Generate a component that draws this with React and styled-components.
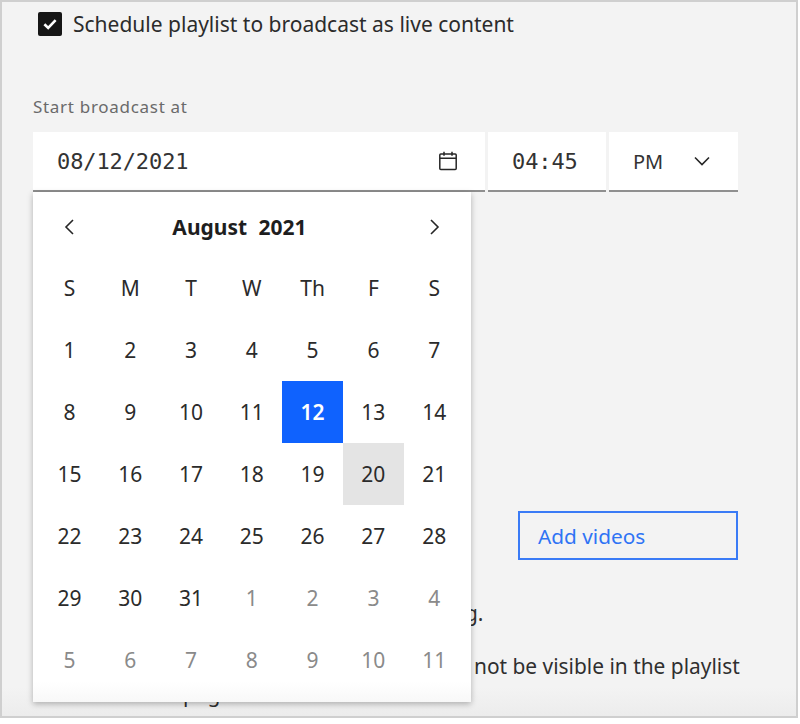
import React from "react";
import styled, { createGlobalStyle } from "styled-components";

const Global = createGlobalStyle`
  html, body { margin: 0; padding: 0; background: #fff; }
  body { font-family: "Noto Sans", "Liberation Sans", sans-serif; color: #262626; }
`;

const Frame = styled.div`
  box-sizing: border-box;
  width: 798px;
  height: 718px;
  background: linear-gradient(to bottom, #f3f3f3 96%, #ececec 100%);
  border: 2px solid #cfcfcf;
  padding: 0 0 0 31px;
  overflow: hidden;
  display: flex;
  flex-direction: column;
`;

const CheckRow = styled.div`
  display: flex;
  align-items: center;
  gap: 11px;
  margin: 10px 0 0 5px;
  height: 24px;
`;

const CheckBox = styled.div`
  width: 24px;
  height: 24px;
  background: #161616;
  border-radius: 2px;
  display: flex;
  align-items: center;
  justify-content: center;
`;

const CheckLabel = styled.span`
  font-size: 21px;
  line-height: 24px;
  color: #2b2b2b;
  white-space: nowrap;
`;

const FieldLabel = styled.div`
  margin-top: 59px;
  height: 24px;
  font-size: 17px;
  line-height: 24px;
  letter-spacing: 0.7px;
  color: #6a6a6a;
`;

const Fields = styled.div`
  position: relative;
  display: flex;
  gap: 3px;
  margin-top: 13px;
  height: 60px;
`;

const Field = styled.div`
  box-sizing: border-box;
  width: ${(p) => p.$w}px;
  height: 60px;
  background: #fff;
  border-bottom: 2px solid #8f8f8f;
  display: flex;
  align-items: center;
  justify-content: space-between;
  padding: ${(p) => p.$pad};
  color: #333;
`;

const Mono = styled.span`
  font-family: "DejaVu Sans Mono", "Liberation Mono", monospace;
  font-size: 22px;
  letter-spacing: -0.1px;
`;

const SansValue = styled.span`
  font-size: 20px;
`;

const Popover = styled.div`
  position: absolute;
  left: 0;
  top: 60px;
  z-index: 2;
  box-sizing: border-box;
  width: 438px;
  height: 510px;
  background: linear-gradient(to bottom, #fff 96%, #f8f8f8 100%);
  box-shadow: 0 2px 6px rgba(0, 0, 0, 0.28);
  padding: 5px 6px 0;
`;

const CalHeader = styled.div`
  display: flex;
  align-items: center;
  justify-content: space-between;
  height: 59.5px;
  padding: 0 21px;
`;

const Month = styled.div`
  font-size: 21px;
  font-weight: 700;
  color: #1e1e1e;
  word-spacing: 6px;
  margin-right: 25px;
`;

const CalGrid = styled.div`
  display: grid;
  grid-template-columns: repeat(7, 60.8px);
  grid-auto-rows: 62px;
`;

const Cell = styled.div`
  display: flex;
  align-items: center;
  justify-content: center;
  font-size: 21px;
  color: ${(p) => (p.$selected ? "#fff" : p.$muted ? "#8a8a8a" : "#2b2b2b")};
  font-weight: ${(p) => (p.$selected ? 600 : 400)};
  background: ${(p) => (p.$selected ? "#0f62fe" : p.$today ? "#e4e4e4" : "transparent")};
`;

const ButtonRow = styled.div`
  display: flex;
  justify-content: flex-end;
  margin-top: 319px;
  padding-right: 58px;
`;

const AddButton = styled.div`
  box-sizing: border-box;
  width: 220px;
  height: 49px;
  border: 2px solid #3a7bf6;
  color: #2f74f5;
  font-size: 20.8px;
  display: flex;
  align-items: center;
  padding-left: 18px;
`;

const Note = styled.div`
  font-size: 20.9px;
  line-height: 28px;
  color: #2f2f2f;
  white-space: nowrap;
  margin-top: ${(p) => p.$top}px;
  padding-left: ${(p) => p.$left}px;
`;

const Svg = styled.svg`
  display: block;
  flex: none;
`;

const Chevron = ({ d, size = 20 }) => (
  <Svg width={size} height={size} viewBox="0 0 20 20" fill="none" stroke="#262626" strokeWidth="1.6">
    <path d={d} />
  </Svg>
);

const weeks = [
  ["1", "2", "3", "4", "5", "6", "7"],
  ["8", "9", "10", "11", "12", "13", "14"],
  ["15", "16", "17", "18", "19", "20", "21"],
  ["22", "23", "24", "25", "26", "27", "28"],
  ["29", "30", "31", "1", "2", "3", "4"],
  ["5", "6", "7", "8", "9", "10", "11"],
];

const heads = ["S", "M", "T", "W", "Th", "F", "S"];

export default function App() {
  return (
    <>
      <Global />
      <Frame>
        <CheckRow>
          <CheckBox>
            <Svg width="18" height="18" viewBox="0 0 16 16" fill="none" stroke="#fff" strokeWidth="2.3">
              <path d="M3 8.2l3.4 3.3L13 4.6" />
            </Svg>
          </CheckBox>
          <CheckLabel>Schedule playlist to broadcast as live content</CheckLabel>
        </CheckRow>
        <FieldLabel>Start broadcast at</FieldLabel>
        <Fields>
          <Field $w={452} $pad="0 27px 0 24px">
            <Mono>08/12/2021</Mono>
            <Svg width="20" height="20" viewBox="0 0 20 20" fill="none" stroke="#262626" strokeWidth="1.5">
              <rect x="1.8" y="3" width="16.4" height="15.4" rx="1" />
              <path d="M2 7.2h16M6 .8v4M14 .8v4" />
            </Svg>
          </Field>
          <Field $w={118} $pad="0 0 0 24px">
            <Mono>04:45</Mono>
          </Field>
          <Field $w={129} $pad="0 26px 0 24px">
            <SansValue>PM</SansValue>
            <Chevron d="M3 6.5l7 7 7-7" />
          </Field>
          <Popover>
            <CalHeader>
              <Chevron d="M13 3l-7 7 7 7" />
              <Month>August 2021</Month>
              <Chevron d="M7 3l7 7-7 7" />
            </CalHeader>
            <CalGrid>
              {heads.map((h, i) => (
                <Cell key={i}>{h}</Cell>
              ))}
              {weeks.map((w, r) =>
                w.map((d, c) => (
                  <Cell
                    key={`${r}-${c}`}
                    $selected={r === 1 && c === 4}
                    $today={r === 2 && c === 5}
                    $muted={(r === 4 && c > 2) || r === 5}
                  >
                    {d}
                  </Cell>
                ))
              )}
            </CalGrid>
          </Popover>
        </Fields>
        <ButtonRow>
          <AddButton>Add videos</AddButton>
        </ButtonRow>
        <Note $top={39} $left={419}>ng.</Note>
        <Note $top={25} $left={441}>not be visible in the playlist</Note>
        <Note $top={0} $left={150}>page</Note>
      </Frame>
    </>
  );
}
